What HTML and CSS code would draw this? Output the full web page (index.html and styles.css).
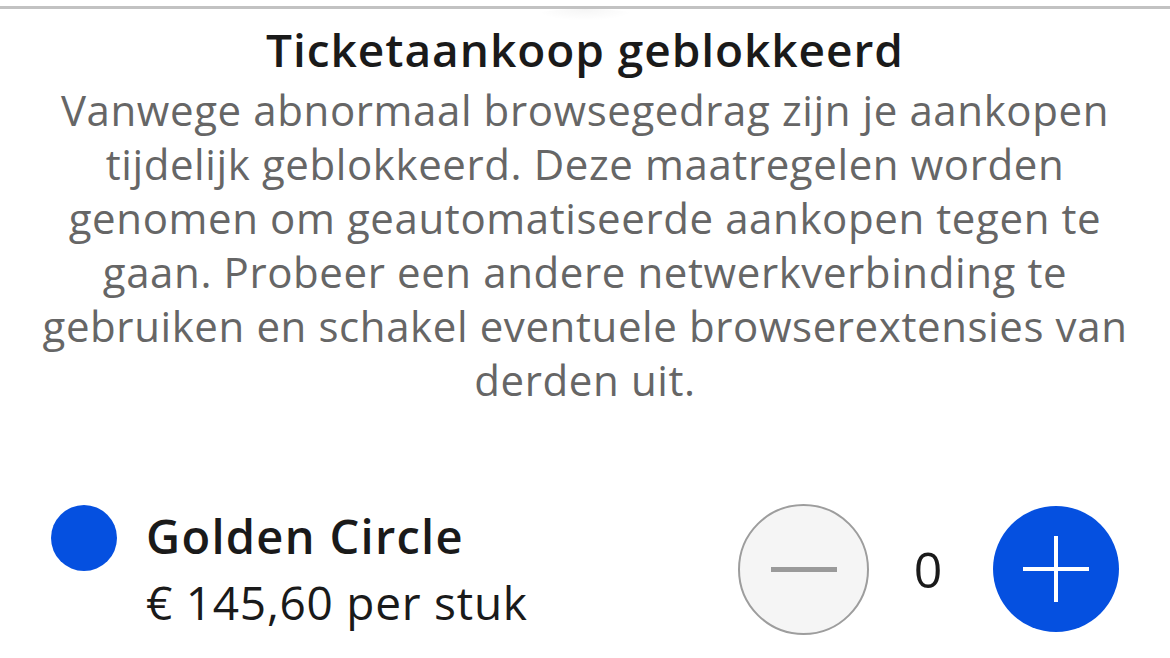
FILE: index.html
```html
<!DOCTYPE html>
<html lang="nl">
<head>
<meta charset="utf-8">
<link rel="stylesheet" href="styles.css">
</head>
<body>
<div class="sheet">
  <div class="sheet-edge"></div>
  <section class="notice">
    <h1 class="notice-title">Ticketaankoop geblokkeerd</h1>
    <p class="notice-text">Vanwege abnormaal browsegedrag zijn je aankopen<br>tijdelijk geblokkeerd. Deze maatregelen worden<br>genomen om geautomatiseerde aankopen tegen te<br>gaan. Probeer een andere netwerkverbinding te<br>gebruiken en schakel eventuele browserextensies van<br>derden uit.</p>
  </section>
  <section class="ticket">
    <div class="ticket-info">
      <span class="ticket-dot"></span>
      <div class="ticket-text">
        <div class="ticket-name">Golden Circle</div>
        <div class="ticket-price">€ 145,60 per stuk</div>
      </div>
    </div>
    <div class="stepper">
      <button class="step step-minus" aria-label="Minder"><span class="bar-h"></span></button>
      <span class="step-count">0</span>
      <button class="step step-plus" aria-label="Meer"><span class="bar-h"></span><span class="bar-v"></span></button>
    </div>
  </section>
</div>
</body>
</html>
```
FILE: styles.css
```css
html, body {
  margin: 0;
  padding: 0;
  background: #ffffff;
}
body {
  width: 1170px;
  height: 658px;
  overflow: hidden;
  font-family: "Open Sans", "Noto Sans", sans-serif;
  color: #1a1a1a;
}
.sheet {
  padding-top: 6px;
}
.sheet-edge {
  height: 3px;
  background: #c2c2c2;
  position: relative;
}
.sheet-edge::after {
  content: "";
  position: absolute;
  left: 535px;
  top: 3px;
  width: 100px;
  height: 12px;
  border-radius: 50%;
  background: radial-gradient(ellipse at center top, rgba(0,0,0,0.04), rgba(0,0,0,0) 70%);
}
.notice {
  text-align: center;
  padding: 0 20px;
}
.notice-title {
  margin: 13px 0 0;
  font-size: 46px;
  font-weight: 600;
  line-height: 54px;
  color: #1a1a1a;
  letter-spacing: 0.95px;
}
.notice-text {
  margin: 7px 0 0;
  font-size: 42px;
  line-height: 54px;
  color: #666666;
  letter-spacing: 0.6px;
}
.ticket {
  display: flex;
  align-items: center;
  justify-content: space-between;
  padding: 0 51px;
  margin-top: 96px;
}
.ticket-info {
  display: flex;
  align-items: flex-start;
  gap: 29px;
}
.ticket-dot {
  width: 66px;
  height: 66px;
  border-radius: 50%;
  background: #0550e0;
  margin-top: 2px;
  flex: none;
}
.ticket-name {
  font-size: 47px;
  font-weight: 600;
  line-height: 66px;
  letter-spacing: 1.3px;
}
.ticket-price {
  font-size: 46px;
  line-height: 66px;
  letter-spacing: 0.75px;
}
.stepper {
  display: flex;
  align-items: center;
}
.step {
  position: relative;
  border-radius: 50%;
  padding: 0;
  margin: 0;
  flex: none;
}
.step-minus {
  width: 131px;
  height: 131px;
  background: #f5f5f5;
  border: 2.5px solid #9d9d9d;
}
.step-plus {
  width: 126px;
  height: 126px;
  background: #0550e0;
  border: none;
}
.bar-h {
  position: absolute;
  left: 50%;
  top: 50%;
  width: 66px;
  height: 4px;
  margin: -2px 0 0 -33px;
}
.step-minus .bar-h {
  background: #9a9a9a;
  height: 5px;
}
.step-plus .bar-h {
  background: #ffffff;
}
.bar-v {
  position: absolute;
  left: 50%;
  top: 50%;
  width: 4px;
  height: 66px;
  margin: -33px 0 0 -2px;
  background: #ffffff;
}
.step-count {
  width: 124px;
  text-align: center;
  font-size: 50px;
  line-height: 60px;
  color: #1a1a1a;
  padding-right: 6px;
  box-sizing: border-box;
}
```
